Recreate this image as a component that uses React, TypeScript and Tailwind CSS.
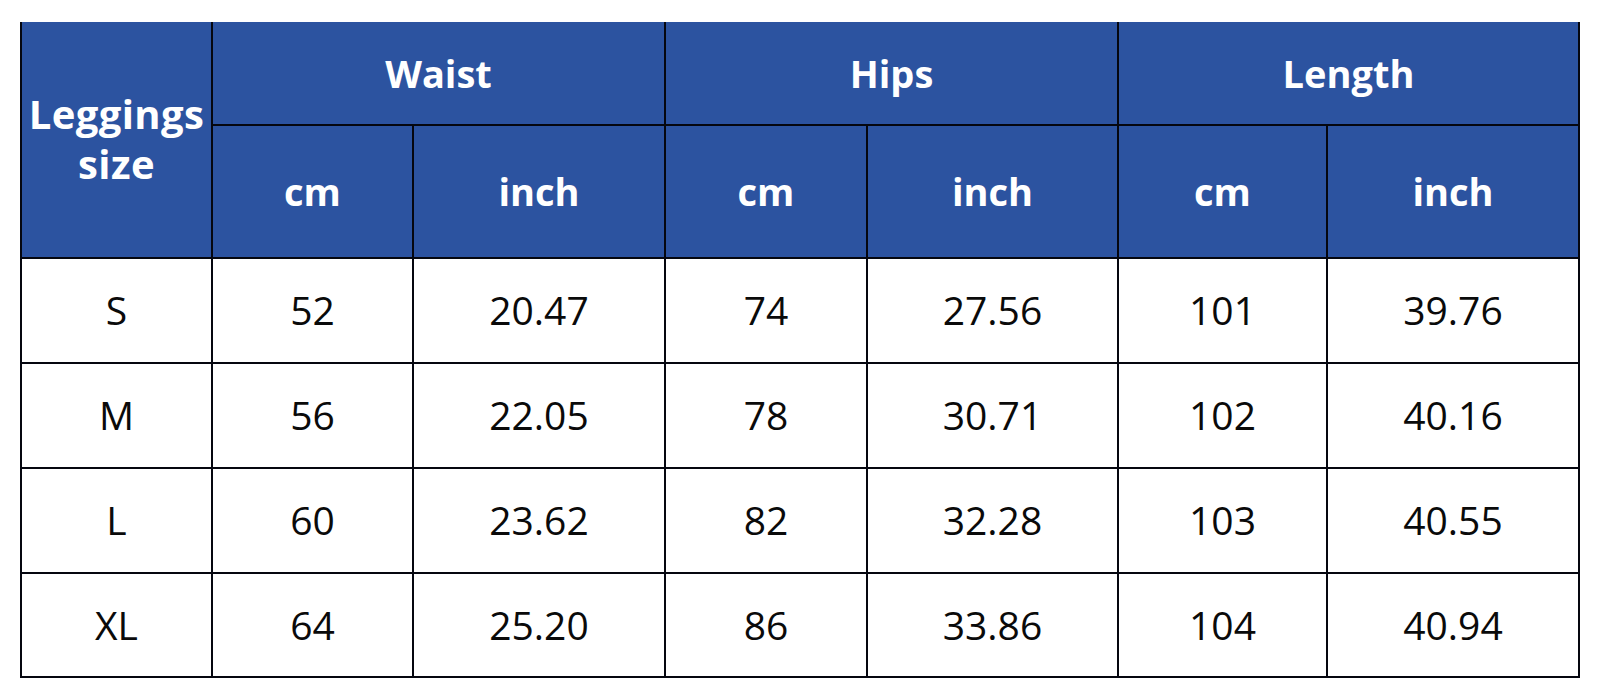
import React from "react";

const rows = [
  ["S", "52", "20.47", "74", "27.56", "101", "39.76"],
  ["M", "56", "22.05", "78", "30.71", "102", "40.16"],
  ["L", "60", "23.62", "82", "32.28", "103", "40.55"],
  ["XL", "64", "25.20", "86", "33.86", "104", "40.94"],
];

export default function App() {
  const head = "bg-[#2c53a0] text-white font-bold flex items-center justify-center text-[38px]";
  const cell = "bg-white text-[#0a0a0a] flex items-center justify-center text-[39px]";
  return (
    <div
      className="w-[1600px] h-[699px] bg-white pt-[22px] pl-[20px]"
      style={{ fontFamily: '"Open Sans", "Liberation Sans", sans-serif' }}
    >
      <div className="inline-grid bg-[#05070f] gap-[2px] px-[2px] pb-[2px] grid-cols-[189px_199px_250px_200px_249px_207px_250px] grid-rows-[102px_131px_103px_103px_103px_102px]">
        <div className={`${head} row-span-2 flex-col text-[40px] leading-[50px] pb-[2px] tracking-[0.4px]`}>
          <span>Leggings</span>
          <span>size</span>
        </div>
        <div className={`${head} col-span-2`}>Waist</div>
        <div className={`${head} col-span-2`}>Hips</div>
        <div className={`${head} col-span-2`}>Length</div>
        <div className={head}>cm</div>
        <div className={head}>inch</div>
        <div className={head}>cm</div>
        <div className={head}>inch</div>
        <div className={head}>cm</div>
        <div className={head}>inch</div>
        {rows.map((r) =>
          r.map((v, i) => (
            <div key={r[0] + i} className={cell}>
              {v}
            </div>
          ))
        )}
      </div>
    </div>
  );
}
